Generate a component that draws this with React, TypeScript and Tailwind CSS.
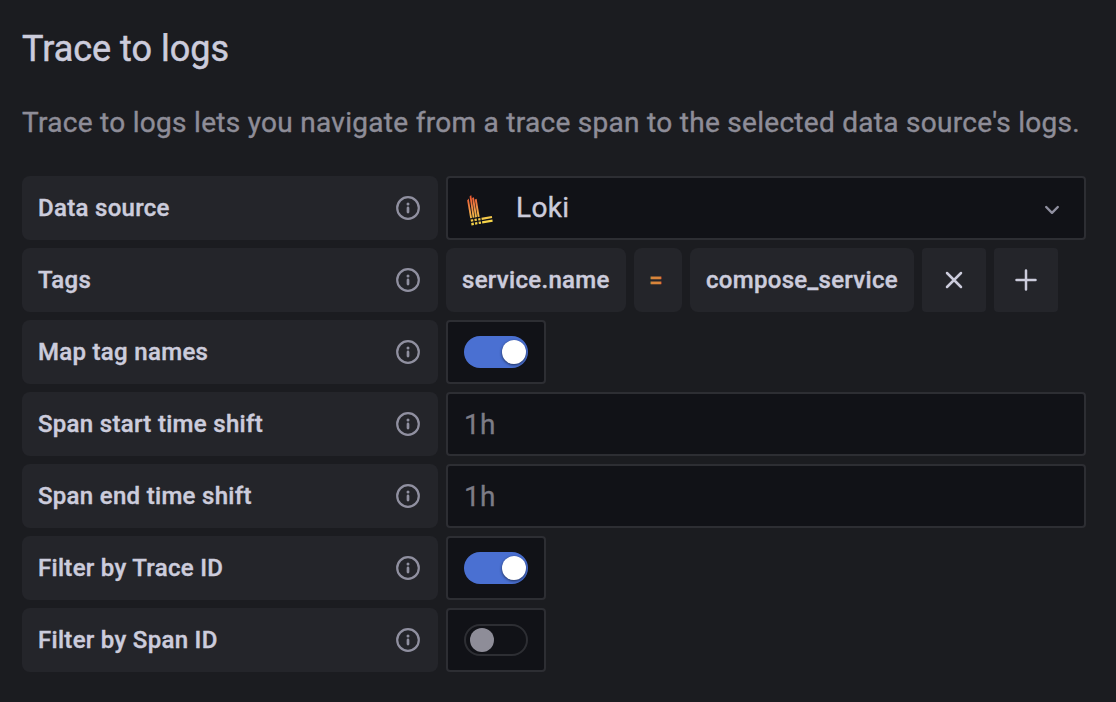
import React from "react";

function InfoIcon() {
  return (
    <svg width="24" height="24" viewBox="0 0 24 24" className="shrink-0" fill="none">
      <circle cx="12" cy="12" r="10.8" stroke="#9090a0" strokeWidth="2.2" />
      <path d="M12 11.9v4.2" stroke="#9090a0" strokeWidth="2.7" strokeLinecap="round" />
      <circle cx="12" cy="7.9" r="1.5" fill="#9090a0" />
    </svg>
  );
}

function LokiLogo() {
  return (
    <svg width="28" height="32" viewBox="0 0 28 32" className="mt-[6px] shrink-0">
      <defs>
        <linearGradient id="loki" gradientUnits="userSpaceOnUse" x1="10" y1="1" x2="15" y2="31">
          <stop offset="0" stopColor="#ee5a32" />
          <stop offset="0.35" stopColor="#f08a45" />
          <stop offset="0.75" stopColor="#f6c94a" />
          <stop offset="1" stopColor="#f8de48" />
        </linearGradient>
      </defs>
      <g fill="url(#loki)">
        <path d="M1.2 5.4 2.7 3.6 6 22.9 4.2 23.2Z" />
        <path d="M3.6 1.6 5.2 .1 8.5 22.5 6.7 22.8Z" />
        <path d="M6.1 3.1 7.9 2.2 11 22.1 9.2 22.4Z" />
        <path d="M8.8 4.6 10.6 3.8 13.6 21.7 11.7 22Z" />
        <path d="M4.6 24.6 7.1 24.2 7.4 26.3 5 26.7ZM5.2 28 7.6 27.6 8 30.1 5.5 30.5ZM8.3 24 10.6 23.6 11 25.7 8.7 26.1ZM8.9 27.4 11.2 27 11.5 29.3 9.3 29.7ZM12 23.4 14.3 23 14.6 25.2 12.4 25.5ZM12.5 26.8 14.8 26.4 15.1 28.8 12.9 29.1Z" />
        <path d="M15.4 22.8 25.8 21.1 26.2 23.1 15.8 24.9ZM16 26.2 26.4 24.5 26.7 26.7 16.3 28.5Z" />
      </g>
    </svg>
  );
}

function Label({ text }: { text: string }) {
  return (
    <div className="flex h-16 w-[416px] shrink-0 items-center justify-between rounded-[8px] bg-[#24252a] pr-[18px] pl-4">
      <span className="text-[24px] leading-8 font-medium tracking-[0.3px] [-webkit-text-stroke:0.4px]">{text}</span>
      <InfoIcon />
    </div>
  );
}

function Row({ label, children }: { label: string; children: React.ReactNode }) {
  return (
    <div className="flex h-16 gap-2">
      <Label text={label} />
      {children}
    </div>
  );
}

function Toggle({ on }: { on: boolean }) {
  return (
    <div className="flex h-16 w-[100px] items-center justify-center rounded-[4px] border-2 border-[#2d2e33] bg-[#111217]">
      {on ? (
        <div className="flex h-8 w-16 items-center justify-end rounded-full bg-[#4a70d2] pr-[2px]">
          <div className="size-6 rounded-full bg-white shadow-[0_1px_3px_rgba(0,0,0,0.6)]" />
        </div>
      ) : (
        <div className="flex h-8 w-16 items-center rounded-full border-2 border-[#2d2e33] pl-1">
          <div className="size-6 rounded-full bg-[#8e8d98]" />
        </div>
      )}
    </div>
  );
}

function TimeInput() {
  return (
    <div className="flex h-16 w-[640px] items-center rounded-[4px] border-2 border-[#2d2e33] bg-[#111217] px-4 pt-px text-[28px] tracking-[0.3px] text-[#7d7c86] [-webkit-text-stroke:0.3px]">
      1h
    </div>
  );
}

function Tag({ className, children }: { className: string; children: React.ReactNode }) {
  return (
    <div
      className={`flex h-16 items-center rounded-[8px] bg-[#24252a] pl-4 text-[24px] font-medium tracking-[0.3px] [-webkit-text-stroke:0.4px] ${className}`}
    >
      {children}
    </div>
  );
}

function IconButton({ label, path }: { label: string; path: string }) {
  return (
    <button aria-label={label} className="flex size-16 items-center justify-center rounded-[4px] bg-[#24252a]">
      <svg width="24" height="24" viewBox="0 0 24 24" fill="none" stroke="#ccccdc" strokeWidth="2.5" strokeLinecap="round">
        <path d={path} />
      </svg>
    </button>
  );
}

export default function App() {
  return (
    <main className="h-[702px] w-[1116px] overflow-hidden bg-[#1b1c20] px-[22px] pt-[25px] font-[Roboto,sans-serif] text-[#ccccdc]">
      <h1 className="h-12 text-[36px] leading-[48px] [-webkit-text-stroke:0.5px]">Trace to logs</h1>
      <p className="mt-[30px] h-10 text-[28px] leading-10 tracking-[0.29px] whitespace-nowrap text-[#8e8d98] [-webkit-text-stroke:0.4px]">
        Trace to logs lets you navigate from a trace span to the selected data source's logs.
      </p>
      <div className="mt-[33px] flex flex-col gap-2">
        <Row label="Data source">
          <div className="flex h-16 w-[640px] items-center rounded-[4px] border-2 border-[#2d2e33] bg-[#111217] pr-[22px] pl-[18px]">
            <LokiLogo />
            <span className="ml-[22px] flex-1 text-[28px] tracking-[0.3px] [-webkit-text-stroke:0.4px]">Loki</span>
            <svg width="20" height="20" viewBox="0 0 20 20" fill="none" className="mt-1">
              <path d="m4.2 7 5.8 5.8L15.8 7" stroke="#9090a0" strokeWidth="2.4" strokeLinecap="round" strokeLinejoin="round" />
            </svg>
          </div>
        </Row>
        <Row label="Tags">
          <Tag className="w-[180px]">service.name</Tag>
          <Tag className="w-12 text-[#d9853b]">
            <span className="-ml-px">=</span>
          </Tag>
          <Tag className="w-[224px]">compose_service</Tag>
          <IconButton label="Remove tag" path="M5 5l14 14M19 5 5 19" />
          <IconButton label="Add tag" path="M12 2.5v19M2.5 12h19" />
        </Row>
        <Row label="Map tag names"><Toggle on /></Row>
        <Row label="Span start time shift"><TimeInput /></Row>
        <Row label="Span end time shift"><TimeInput /></Row>
        <Row label="Filter by Trace ID"><Toggle on /></Row>
        <Row label="Filter by Span ID"><Toggle on={false} /></Row>
      </div>
    </main>
  );
}
